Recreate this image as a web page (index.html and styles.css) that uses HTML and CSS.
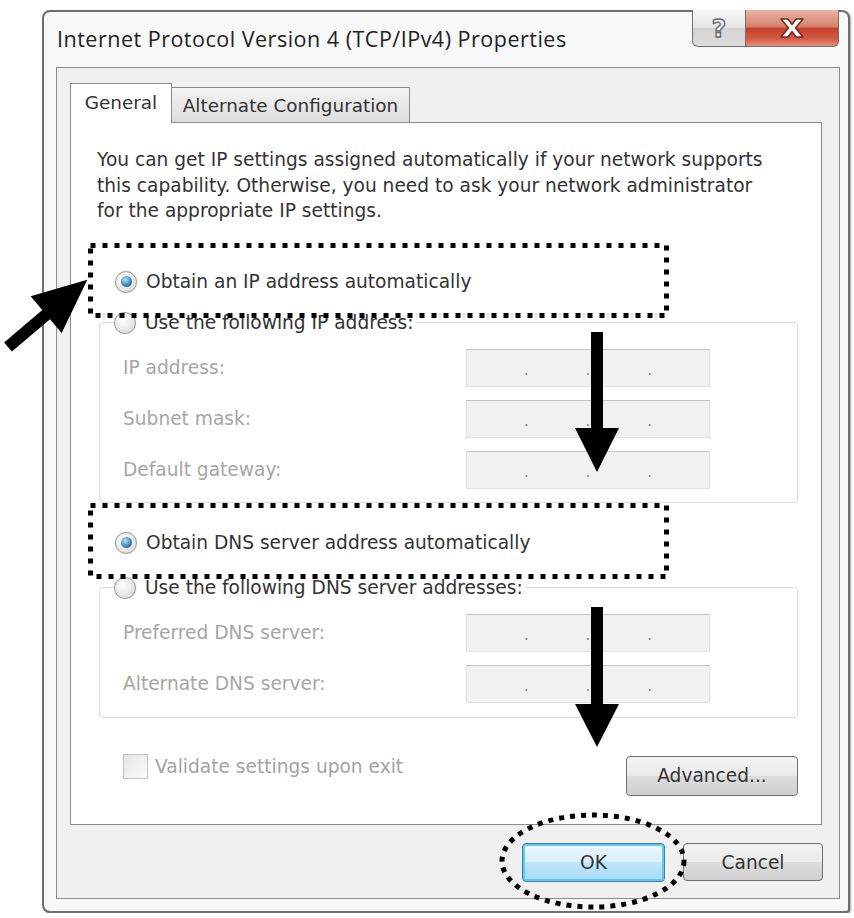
FILE: index.html
```html
<!DOCTYPE html>
<html lang="en">
<head>
    <meta charset="UTF-8">
    <title>Internet Protocol Version 4 (TCP/IPv4) Properties</title>
    <link rel="stylesheet" href="styles.css">
</head>
<body>

    <div class="window">
        <div class="titlebar">
            <span class="title">Internet Protocol Version 4 (TCP/IPv4) Properties</span>
            <div class="caption-btns">
                <span class="cap help">?</span>
                <span class="cap close">
                    <svg width="28" height="22" viewBox="0 0 28 22">
                        <path d="M3 2 H10 L14 7.5 L18 2 H25 L17.5 11 L25 20 H18 L14 14.5 L10 20 H3 L10.5 11 Z" fill="#fff" stroke="#6b2a1e" stroke-width="1.4" stroke-linejoin="round"/>
                    </svg>
                </span>
            </div>
        </div>

        <div class="client">
            <div class="tabs">
                <span class="tab active">General</span>
                <span class="tab">Alternate Configuration</span>
            </div>

            <div class="tabpanel">
                <p class="intro">
                    You can get IP settings assigned automatically if your network supports<br>
                    this capability. Otherwise, you need to ask your network administrator<br>
                    for the appropriate IP settings.
                </p>

                <div class="option auto-ip"><span class="radio on"></span>Obtain an IP address automatically</div>

                <fieldset class="group">
                    <legend class="option"><span class="radio"></span>Use the following IP address:</legend>
                    <div class="row"><span class="lbl">IP address:</span><span class="ip"><i>.</i><i>.</i><i>.</i></span></div>
                    <div class="row"><span class="lbl">Subnet mask:</span><span class="ip"><i>.</i><i>.</i><i>.</i></span></div>
                    <div class="row"><span class="lbl">Default gateway:</span><span class="ip"><i>.</i><i>.</i><i>.</i></span></div>
                </fieldset>

                <div class="option auto-dns"><span class="radio on"></span>Obtain DNS server address automatically</div>

                <fieldset class="group dns">
                    <legend class="option"><span class="radio"></span>Use the following DNS server addresses:</legend>
                    <div class="row"><span class="lbl">Preferred DNS server:</span><span class="ip"><i>.</i><i>.</i><i>.</i></span></div>
                    <div class="row"><span class="lbl">Alternate DNS server:</span><span class="ip"><i>.</i><i>.</i><i>.</i></span></div>
                </fieldset>

                <div class="bottom-row">
                    <span class="check"><span class="box"></span>Validate settings upon exit</span>
                    <span class="btn advanced">Advanced...</span>
                </div>
            </div>

            <div class="dialog-btns">
                <span class="btn ok">OK</span>
                <span class="btn cancel">Cancel</span>
            </div>
        </div>
    </div>

    <!-- annotation marks drawn over the dialog -->
    <svg class="marks" width="854" height="918" viewBox="0 0 854 918">
        <rect x="90.5" y="245.5" width="576" height="70" fill="none" stroke="#000" stroke-width="5" stroke-dasharray="5 7"/>
        <rect x="90.5" y="505.5" width="576" height="71" fill="none" stroke="#000" stroke-width="5" stroke-dasharray="5 7"/>
        <ellipse cx="593" cy="861" rx="91" ry="46" fill="none" stroke="#000" stroke-width="5" stroke-dasharray="5 6"/>

        <g transform="translate(8 347) rotate(-40.3)">
            <polygon points="0,-6 50,-6 50,-24 104,0 50,24 50,6 0,6" fill="#000"/>
        </g>

        <rect x="591" y="332" width="12" height="100" fill="#000"/>
        <polygon points="575,428 619,428 597,472" fill="#000"/>

        <rect x="591" y="607" width="12" height="100" fill="#000"/>
        <polygon points="575,704 619,704 597,747" fill="#000"/>
    </svg>

</body>
</html>
```

FILE: styles.css
```css
body {
    margin: 0;
    background-color: #fff;
    font-family: "DejaVu Sans", sans-serif;
    color: #333;
}

.window {
    box-sizing: border-box;
    width: 808px;
    height: 903px;
    margin: 10px 0 0 42px;
    border: 2px solid #6e6e6e;
    border-radius: 8px 8px 4px 8px;
    background-color: #f8f8f8;
    box-shadow: 1px 1px 2px rgba(0, 0, 0, 0.35);
}

.titlebar {
    display: flex;
    justify-content: space-between;
    align-items: flex-start;
    height: 55px;
}

.title {
    margin: 13px 0 0 13px;
    font-family: "Open Sans", sans-serif;
    font-size: 21.5px;
    letter-spacing: 0.5px;
    line-height: 28px;
    color: #222;
}

.caption-btns {
    display: flex;
    margin: -2px 9px 0 0;
}

.cap {
    display: flex;
    align-items: center;
    justify-content: center;
    height: 37px;
    box-sizing: border-box;
    border: 1px solid #6f6f6f;
    border-top: none;
}

.help {
    width: 54px;
    border-radius: 0 0 0 6px;
    background: linear-gradient(#f7f7f7, #e4e4e4 50%, #d3d3d3 51%, #dcdcdc);
    font-weight: bold;
    font-size: 25px;
    color: #f4f4f4;
    -webkit-text-stroke: 1.4px #6a6a6a;
}

.close {
    width: 93px;
    border-left: none;
    border-radius: 0 0 6px 0;
    background: linear-gradient(#eab3a6, #d88470 45%, #c6402a 52%, #d35c45 80%, #e4937f);
}

.client {
    box-sizing: border-box;
    height: 832px;
    margin: 0 8px 0 12px;
    border: 1px solid #8c8c8c;
    background-color: #f0f0f0;
}

.tabs {
    display: flex;
    align-items: flex-end;
    padding: 15px 0 0 13px;
}

.tab {
    box-sizing: border-box;
    display: flex;
    align-items: center;
    justify-content: center;
    height: 35px;
    font-size: 18.4px;
    border: 1px solid #898c95;
    border-bottom: none;
    background: linear-gradient(#f4f4f4, #e8e8e8 50%, #dedede);
}

.tab + .tab {
    width: 238px;
    border-left: none;
}

.tab.active {
    position: relative;
    z-index: 1;
    width: 102px;
    height: 40px;
    background: #fff;
    margin-bottom: -1px;
    padding-bottom: 2px;
}

.tabpanel {
    box-sizing: border-box;
    height: 703px;
    margin: 0 17px 0 13px;
    padding: 24px 0 0 26px;
    border: 1px solid #898c95;
    background-color: #fff;
    font-size: 18.6px;
}

.intro {
    margin: 0;
    line-height: 25.5px;
}

.option {
    display: flex;
    align-items: center;
    height: 26px;
    color: #333;
}

.auto-ip {
    margin: 45px 0 0 18px;
}

.auto-dns {
    margin: 27px 0 0 18px;
}

.radio {
    box-sizing: border-box;
    width: 22px;
    height: 22px;
    margin-right: 9px;
    border: 1px solid #9b9b9b;
    border-radius: 50%;
    background: radial-gradient(circle at 40% 35%, #ffffff, #e6e6e6 60%, #cfcfcf);
    box-shadow: 0 0 1px #bbb;
    display: flex;
    align-items: center;
    justify-content: center;
}

.radio.on::after {
    content: "";
    width: 11px;
    height: 11px;
    border-radius: 50%;
    background: radial-gradient(circle at 40% 35%, #b8e6fb, #3c83c0 55%, #1b4f80);
}

.group {
    box-sizing: border-box;
    width: 699px;
    margin: 15px 0 0 2px;
    padding: 0 0 13px 23px;
    border: 1px solid #dcdcdc;
    border-radius: 4px;
}

.group.dns {
    margin-top: 19px;
    padding-bottom: 14px;
}

.group legend {
    margin-left: -9px;
    padding: 0 2px 0 0;
}

.row {
    display: grid;
    grid-template-columns: 343px 244px;
    align-items: center;
    height: 38px;
    margin-top: 13px;
}

.lbl {
    color: #a6a6a6;
}

.ip {
    box-sizing: border-box;
    display: flex;
    justify-content: space-evenly;
    align-items: center;
    height: 38px;
    border: 1px solid #e2e2e2;
    border-top-color: #c3c3c3;
    background-color: #f1f1f1;
}

.ip i {
    font-style: normal;
    font-size: 15px;
    color: #8a8a8a;
    margin-top: 4px;
}

.bottom-row {
    display: flex;
    justify-content: space-between;
    align-items: flex-start;
    width: 699px;
    margin: 36px 0 0 2px;
}

.check {
    display: flex;
    align-items: center;
    height: 25px;
    margin-left: 24px;
    color: #a3a3a3;
}

.box {
    box-sizing: border-box;
    width: 25px;
    height: 25px;
    margin-right: 7px;
    border: 1px solid #c4c4c4;
    background: linear-gradient(135deg, #e6e6e6, #fbfbfb);
}

.btn {
    box-sizing: border-box;
    display: flex;
    align-items: center;
    justify-content: center;
    border: 1px solid #707070;
    border-radius: 4px;
    background: linear-gradient(#f3f3f3, #ebebeb 49%, #dddddd 50%, #d0d0d0);
    color: #333;
    font-size: 18.6px;
}

.advanced {
    width: 172px;
    height: 40px;
    margin-top: 2px;
}

.dialog-btns {
    display: flex;
    justify-content: flex-end;
    gap: 18px;
    margin-top: 18px;
    padding-right: 16px;
}

.ok {
    width: 143px;
    height: 39px;
    border: 1px solid #3c7fb1;
    background: linear-gradient(#eaf6fd, #d9f0fc 49%, #bee6fd 50%, #a7d9f5);
    box-shadow: inset 0 0 0 2px #61c8ee;
}

.cancel {
    width: 140px;
    height: 38px;
}

.marks {
    position: absolute;
    top: 0;
    left: 0;
    pointer-events: none;
}
```
